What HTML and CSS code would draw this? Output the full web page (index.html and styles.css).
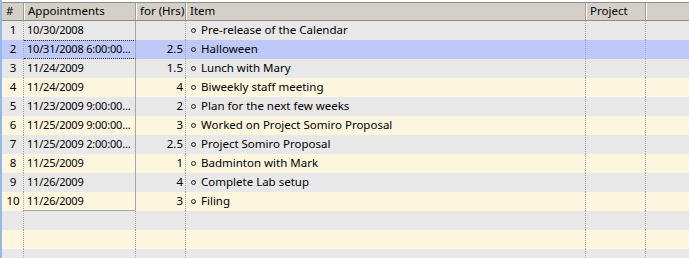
FILE: index.html
```html
<!DOCTYPE html>
<html>
<head>
<meta charset="utf-8">
<link rel="stylesheet" href="styles.css">
</head>
<body>
<div class="grid">
  <div class="hdr">
    <div class="hc c-num">#</div>
    <div class="hc c-app">Appointments</div>
    <div class="hc c-hrs">for (Hrs)</div>
    <div class="hc c-item">Item</div>
    <div class="hc c-proj">Project</div>
    <div class="hc c-fill"></div>
  </div>
  <div class="rows">
    <div class="row odd"><div class="c c-num">1</div><div class="c c-app box">10/30/2008</div><div class="c c-hrs"></div><div class="c c-item"><span class="dot"></span>Pre-release of the Calendar</div><div class="c c-proj"></div><div class="c c-fill"></div></div>
    <div class="row sel"><div class="c c-num">2</div><div class="c c-app box focus">10/31/2008 6:00:00...</div><div class="c c-hrs">2.5</div><div class="c c-item"><span class="dot"></span>Halloween</div><div class="c c-proj"></div><div class="c c-fill"></div></div>
    <div class="row odd"><div class="c c-num">3</div><div class="c c-app box">11/24/2009</div><div class="c c-hrs">1.5</div><div class="c c-item"><span class="dot"></span>Lunch with Mary</div><div class="c c-proj"></div><div class="c c-fill"></div></div>
    <div class="row even"><div class="c c-num">4</div><div class="c c-app box">11/24/2009</div><div class="c c-hrs">4</div><div class="c c-item"><span class="dot"></span>Biweekly staff meeting</div><div class="c c-proj"></div><div class="c c-fill"></div></div>
    <div class="row odd"><div class="c c-num">5</div><div class="c c-app box">11/23/2009 9:00:00...</div><div class="c c-hrs">2</div><div class="c c-item"><span class="dot"></span>Plan for the next few weeks</div><div class="c c-proj"></div><div class="c c-fill"></div></div>
    <div class="row even"><div class="c c-num">6</div><div class="c c-app box">11/25/2009 9:00:00...</div><div class="c c-hrs">3</div><div class="c c-item"><span class="dot"></span>Worked on Project Somiro Proposal</div><div class="c c-proj"></div><div class="c c-fill"></div></div>
    <div class="row odd"><div class="c c-num">7</div><div class="c c-app box">11/25/2009 2:00:00...</div><div class="c c-hrs">2.5</div><div class="c c-item"><span class="dot"></span>Project Somiro Proposal</div><div class="c c-proj"></div><div class="c c-fill"></div></div>
    <div class="row even"><div class="c c-num">8</div><div class="c c-app box">11/25/2009</div><div class="c c-hrs">1</div><div class="c c-item"><span class="dot"></span>Badminton with Mark</div><div class="c c-proj"></div><div class="c c-fill"></div></div>
    <div class="row odd"><div class="c c-num">9</div><div class="c c-app box">11/26/2009</div><div class="c c-hrs">4</div><div class="c c-item"><span class="dot"></span>Complete Lab setup</div><div class="c c-proj"></div><div class="c c-fill"></div></div>
    <div class="row even"><div class="c c-num">10</div><div class="c c-app box last">11/26/2009</div><div class="c c-hrs">3</div><div class="c c-item"><span class="dot"></span>Filing</div><div class="c c-proj"></div><div class="c c-fill"></div></div>
    <div class="row odd"><div class="c c-num"></div><div class="c c-app"></div><div class="c c-hrs"></div><div class="c c-item"></div><div class="c c-proj"></div><div class="c c-fill"></div></div>
    <div class="row even"><div class="c c-num"></div><div class="c c-app"></div><div class="c c-hrs"></div><div class="c c-item"></div><div class="c c-proj"></div><div class="c c-fill"></div></div>
    <div class="row odd"><div class="c c-num"></div><div class="c c-app"></div><div class="c c-hrs"></div><div class="c c-item"></div><div class="c c-proj"></div><div class="c c-fill"></div></div>
  </div>
</div>
</body>
</html>
```
FILE: styles.css
```css
html, body {
  margin: 0;
  padding: 0;
  background: #ffffff;
  overflow: hidden;
}
.grid {
  width: 689px;
  height: 258px;
  box-sizing: border-box;
  border-left: 2px solid #97b7e6;
  padding-top: 2px;
  font-family: "Noto Sans", "DejaVu Sans", sans-serif;
  font-size: 11.5px;
  color: #000;
  overflow: hidden;
}
.hdr {
  display: flex;
  height: 19px;
  box-sizing: border-box;
  background: #d4d0c8;
  border-top: 1px solid #8e8c88;
  border-bottom: 1px solid #8e8c88;
}
.hc {
  box-sizing: border-box;
  height: 17px;
  line-height: 16px;
  padding-left: 3px;
  border-left: 1px solid #ffffff;
  border-right: 1px solid #a09d98;
  white-space: nowrap;
}
.hdr .c-num { padding-left: 4px; border-left: none; }
.hdr .c-fill { border-right: none; }
.c-num { width: 22px; flex: none; }
.c-app { width: 112px; flex: none; }
.c-hrs { width: 50px; flex: none; }
.c-item { width: 400px; flex: none; }
.c-proj { width: 60px; flex: none; }
.c-fill { flex: 1; }
.row {
  display: flex;
  height: 19px;
}
.odd { background: #e8e8e8; }
.even { background: #fdf6de; }
.sel { background: #bfc9f8; }
.c {
  box-sizing: border-box;
  height: 19px;
  line-height: 18px;
  white-space: nowrap;
  overflow: hidden;
  border-right: 1px dotted #a8a8a8;
}
.row .c-num {
  text-align: center;
  border-right: 1px dotted #a8a8a8;
  padding-left: 1px;
}
.row .c-app {
  padding-left: 3px;
  font-size: 11px;
  letter-spacing: -0.2px;
}
.row .c-app.box {
  border-right: 1px solid #a8a8a8;
}
.row .c-app.last {
  border-bottom: 1px solid #a8a8a8;
}
.row .c-app.focus {
  border-top: 1px dotted #333;
  border-bottom: 1px dotted #333;
  line-height: 16px;
}
.row .c-hrs {
  text-align: right;
  padding-right: 2px;
}
.row .c-item {
  padding-left: 5px;
}
.row .c-fill { border-right: none; }
.dot {
  display: inline-block;
  width: 5px;
  height: 5px;
  box-sizing: border-box;
  border: 1px solid #222;
  border-radius: 50%;
  margin-right: 5px;
  vertical-align: 1px;
}
```
